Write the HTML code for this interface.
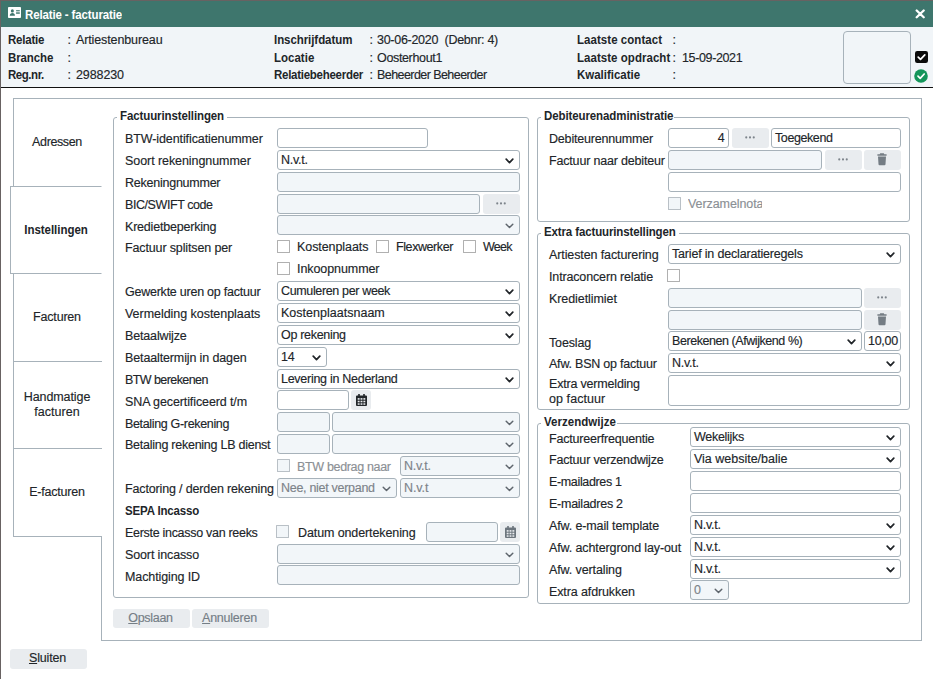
<!DOCTYPE html><html lang="nl"><head><meta charset="utf-8"><title>Relatie - facturatie</title><style>
*{box-sizing:border-box;margin:0;padding:0}
html,body{width:933px;height:679px;overflow:hidden;background:#fff}
body{font-family:"Liberation Sans",sans-serif;font-size:12.5px;color:#212529;position:relative}
.a{position:absolute}
.t{position:absolute;white-space:pre;line-height:16px;height:16px;-webkit-text-stroke:0.15px currentColor}
.b{font-weight:bold;-webkit-text-stroke:0;transform:scaleY(1.05);transform-origin:0 60%}
.g{color:#8b9095}
.in{position:absolute;border:1px solid #a7b2ba;border-radius:3px;background:#fff;height:20px;overflow:hidden}
.dis{background:#f2f6f9}
.in .t{top:1px;left:3px}
.btn{position:absolute;background:#e9ecef;border-radius:3px;height:20px;color:#6c757d}
.cb{position:absolute;width:13px;height:13px;border:1px solid #b0b0b0;border-radius:0.5px;background:#fff}
.cb.dis{background:#f2f6f9;border-color:#b9c0c6}
.fs{position:absolute;border:1px solid #a7b2ba;border-radius:3px}
.lg{position:absolute;background:#fff;padding:0 1px 0 3px;font-weight:bold;white-space:nowrap;line-height:16px;transform:scaleY(1.05);transform-origin:0 60%}
.tab{position:absolute;left:13px;width:89px;border:1px solid #a7b2ba;background:#fff;text-align:center}
.chev{position:absolute;right:5px;top:6.600px;width:9px;height:6px}
.dots{position:absolute;left:50%;top:8px;margin-left:-6px;width:10px;height:3px}
</style></head><body>
<div class="a" style="left:0;top:0;width:933px;height:27px;background:#3e766d"></div>
<div class="a" style="left:0;top:0;width:933px;height:1px;background:#686262"></div>
<div class="a" style="left:0;top:27px;width:933px;height:60px;background:#f1f5f8"></div>
<div class="a" style="left:0;top:87px;width:933px;height:1px;background:#111"></div>
<div class="a" style="left:0;top:0;width:1px;height:679px;background:#686262"></div>
<svg class="a" style="left:8px;top:7px;width:13px;height:11px" viewBox="0 0 14 11" preserveAspectRatio="none"><rect x="0" y="0" width="14" height="11" rx="0.900" fill="#fff"/><circle cx="4.700" cy="3.900" r="1.650" fill="#3e766d"/><path d="M1.900 8.700c0-1.900 1.300-2.700 2.800-2.700s2.800 0.800 2.800 2.700z" fill="#3e766d"/><rect x="8.700" y="3.200" width="4" height="1.100" fill="#3e766d"/><rect x="8.700" y="5.200" width="4" height="1.700" fill="#3e766d" opacity="0.850"/></svg>
<div class="t b" style="left:25px;top:7px;letter-spacing:-0.135px;font-size:11.5px;color:#fff">Relatie - facturatie</div>
<svg class="a" style="left:915px;top:9px;width:10px;height:10px" viewBox="0 0 10 10"><path d="M1.700 1.500L8.700 8.300M8.700 1.500L1.700 8.300" stroke="#fff" stroke-width="2.300" stroke-linecap="round"/></svg>
<div class="t b" style="left:8px;top:32px;letter-spacing:-0.203px;font-size:11.5px;">Relatie</div>
<div class="t " style="left:67.5px;top:32px;letter-spacing:-0.53px;">:</div>
<div class="t " style="left:76px;top:32px;letter-spacing:-0.118px;white-space:pre">Artiestenbureau</div>
<div class="t b" style="left:8px;top:50px;letter-spacing:-0.104px;font-size:11.5px;">Branche</div>
<div class="t " style="left:67.5px;top:50px;letter-spacing:-0.53px;">:</div>
<div class="t b" style="left:8px;top:67px;letter-spacing:-0.455px;font-size:11.5px;">Reg.nr.</div>
<div class="t " style="left:67.5px;top:67px;letter-spacing:-0.53px;">:</div>
<div class="t " style="left:76px;top:67px;letter-spacing:-0.103px;white-space:pre">2988230</div>
<div class="t b" style="left:274px;top:32px;letter-spacing:-0.067px;font-size:11.5px;">Inschrijfdatum</div>
<div class="t " style="left:369.5px;top:32px;letter-spacing:-0.53px;">:</div>
<div class="t " style="left:377px;top:32px;letter-spacing:-0.281px;white-space:pre">30-06-2020  (Debnr: 4)</div>
<div class="t b" style="left:274px;top:50px;letter-spacing:0.005px;font-size:11.5px;">Locatie</div>
<div class="t " style="left:369.5px;top:50px;letter-spacing:-0.53px;">:</div>
<div class="t " style="left:377px;top:50px;letter-spacing:-0.345px;white-space:pre">Oosterhout1</div>
<div class="t b" style="left:274px;top:67px;letter-spacing:-0.267px;font-size:11.5px;">Relatiebeheerder</div>
<div class="t " style="left:369.5px;top:67px;letter-spacing:-0.53px;">:</div>
<div class="t " style="left:377px;top:67px;letter-spacing:-0.565px;white-space:pre">Beheerder Beheerder</div>
<div class="t b" style="left:577px;top:32px;letter-spacing:0.046px;font-size:11.5px;">Laatste contact</div>
<div class="t " style="left:672.5px;top:32px;letter-spacing:-0.53px;">:</div>
<div class="t b" style="left:577px;top:50px;letter-spacing:0.039px;font-size:11.5px;">Laatste opdracht</div>
<div class="t " style="left:672.5px;top:50px;letter-spacing:-0.53px;">:</div>
<div class="t " style="left:682px;top:50px;letter-spacing:-0.365px;white-space:pre">15-09-2021</div>
<div class="t b" style="left:577px;top:67px;letter-spacing:-0.019px;font-size:11.5px;">Kwalificatie</div>
<div class="t " style="left:672.5px;top:67px;letter-spacing:-0.53px;">:</div>
<div class="a" style="left:843px;top:31px;width:68px;height:53px;border:1px solid #a7b2ba;border-radius:4px;background:#f1f5f8"></div>
<svg class="a" style="left:915px;top:51px;width:13px;height:12px" viewBox="0 0 13 12"><rect width="13" height="12" rx="2.200" fill="#0b0b0b"/><path d="M3.200 6.200l2.300 2.200 4.300-4.600" fill="none" stroke="#fff" stroke-width="1.700" stroke-linecap="round" stroke-linejoin="round"/></svg>
<svg class="a" style="left:914px;top:69px;width:14px;height:14px" viewBox="0 0 14 14"><circle cx="7" cy="7" r="6.800" fill="#14955a"/><path d="M4 7.200l2.200 2.100 4-4.300" fill="none" stroke="#fff" stroke-width="1.700" stroke-linecap="round" stroke-linejoin="round"/></svg>
<div class="a" style="left:101px;top:98px;width:821px;height:543px;border:1px solid #a7b2ba;background:#fff"></div>
<div class="a" style="left:13px;top:98px;width:89px;height:439px;border:1px solid #a7b2ba;border-right:none;background:#fff"></div>
<div class="a" style="left:13px;top:98px;width:89px;height:1px;background:#a7b2ba"></div>
<div class="t " style="left:57px;top:134px;letter-spacing:-0.377px;left:13px;width:88px;text-align:center">Adressen</div>
<div class="a" style="left:13px;top:273px;width:89px;height:1px;background:#a7b2ba"></div>
<div class="t " style="left:57px;top:309px;letter-spacing:-0.193px;left:13px;width:88px;text-align:center">Facturen</div>
<div class="a" style="left:13px;top:361px;width:89px;height:1px;background:#a7b2ba"></div>
<div class="t " style="left:57px;top:389px;letter-spacing:-0.088px;left:13px;width:88px;text-align:center">Handmatige</div>
<div class="t " style="left:57px;top:404px;letter-spacing:0.015px;left:13px;width:88px;text-align:center">facturen</div>
<div class="a" style="left:13px;top:448px;width:89px;height:1px;background:#a7b2ba"></div>
<div class="t " style="left:57px;top:484px;letter-spacing:-0.208px;left:13px;width:88px;text-align:center">E-facturen</div>
<div class="a" style="left:10px;top:186px;width:92px;height:88px;border:1px solid #a7b2ba;border-right:1px solid #fff;background:#fff"></div>
<div class="t b" style="left:57px;top:222px;letter-spacing:-0.034px;font-size:11.5px;left:11px;width:90px;text-align:center">Instellingen</div>
<div class="fs" style="left:113px;top:117px;width:416px;height:481px"></div>
<div class="lg" style="left:117px;top:108px;padding-right:3px;letter-spacing:-0.109px;font-size:11.5px;">Factuurinstellingen</div>
<div class="t " style="left:125px;top:131.3px;letter-spacing:-0.1px;">BTW-identificatienummer</div>
<div class="in" style="left:277px;top:128px;width:151px;height:20px"></div>
<div class="t " style="left:125px;top:153.17px;letter-spacing:-0.068px;">Soort rekeningnummer</div>
<div class="in sel" style="left:277px;top:150px;width:243px"><div class="t" style="color:#212529;letter-spacing:-0.275px;">N.v.t.</div><svg class="chev" viewBox="0 0 9 6"><path d="M1.200 1.200 L4.500 4.600 L7.800 1.200" fill="none" stroke="#212529" stroke-width="1.7" stroke-linecap="round" stroke-linejoin="round"/></svg></div>
<div class="t " style="left:125px;top:175.04px;letter-spacing:-0.241px;">Rekeningnummer</div>
<div class="in dis" style="left:277px;top:172px;width:243px;height:20px"></div>
<div class="t " style="left:125px;top:196.91px;letter-spacing:-0.428px;">BIC/SWIFT code</div>
<div class="in dis" style="left:277px;top:194px;width:203px;height:20px"></div>
<div class="btn" style="left:483px;top:194px;width:37px;height:20px;background:#e9ecef"><svg class="dots" viewBox="0 0 10 3"><circle cx="1.250" cy="1.400" r="1.050" fill="#7d848b"/><circle cx="5" cy="1.400" r="1.050" fill="#7d848b"/><circle cx="8.750" cy="1.400" r="1.050" fill="#7d848b"/></svg></div>
<div class="t " style="left:125px;top:218.78px;letter-spacing:-0.201px;">Kredietbeperking</div>
<div class="in sel dis" style="left:277px;top:215px;width:243px"><svg class="chev" viewBox="0 0 9 6"><path d="M1.200 1.200 L4.500 4.600 L7.800 1.200" fill="none" stroke="#5f666d" stroke-width="1.45" stroke-linecap="round" stroke-linejoin="round"/></svg></div>
<div class="t " style="left:125px;top:240.25px;letter-spacing:-0.137px;">Factuur splitsen per</div>
<div class="cb" style="left:277px;top:240px"></div>
<div class="t " style="left:297px;top:239px;letter-spacing:-0.071px;">Kostenplaats</div>
<div class="cb" style="left:376px;top:240px"></div>
<div class="t " style="left:396px;top:239px;letter-spacing:-0.412px;">Flexwerker</div>
<div class="cb" style="left:463px;top:240px"></div>
<div class="t " style="left:483px;top:239px;letter-spacing:-0.734px;">Week</div>
<div class="cb" style="left:277px;top:262px"></div>
<div class="t " style="left:297px;top:261px;letter-spacing:-0.079px;">Inkoopnummer</div>
<div class="t " style="left:125px;top:284.39px;letter-spacing:-0.239px;">Gewerkte uren op factuur</div>
<div class="in sel" style="left:277px;top:281px;width:243px"><div class="t" style="color:#212529;letter-spacing:-0.352px;">Cumuleren per week</div><svg class="chev" viewBox="0 0 9 6"><path d="M1.200 1.200 L4.500 4.600 L7.800 1.200" fill="none" stroke="#212529" stroke-width="1.7" stroke-linecap="round" stroke-linejoin="round"/></svg></div>
<div class="t " style="left:125px;top:306.26px;letter-spacing:-0.039px;">Vermelding kostenplaats</div>
<div class="in sel" style="left:277px;top:303px;width:243px"><div class="t" style="color:#212529;letter-spacing:0.016px;">Kostenplaatsnaam</div><svg class="chev" viewBox="0 0 9 6"><path d="M1.200 1.200 L4.500 4.600 L7.800 1.200" fill="none" stroke="#212529" stroke-width="1.7" stroke-linecap="round" stroke-linejoin="round"/></svg></div>
<div class="t " style="left:125px;top:328.13px;letter-spacing:-0.153px;">Betaalwijze</div>
<div class="in sel" style="left:277px;top:325px;width:243px"><div class="t" style="color:#212529;letter-spacing:-0.305px;">Op rekening</div><svg class="chev" viewBox="0 0 9 6"><path d="M1.200 1.200 L4.500 4.600 L7.800 1.200" fill="none" stroke="#212529" stroke-width="1.7" stroke-linecap="round" stroke-linejoin="round"/></svg></div>
<div class="t " style="left:125px;top:350.0px;letter-spacing:-0.129px;">Betaaltermijn in dagen</div>
<div class="in sel" style="left:277px;top:347px;width:50px"><div class="t" style="color:#212529;letter-spacing:-0.103px;">14</div><svg class="chev" viewBox="0 0 9 6"><path d="M1.200 1.200 L4.500 4.600 L7.800 1.200" fill="none" stroke="#212529" stroke-width="1.7" stroke-linecap="round" stroke-linejoin="round"/></svg></div>
<div class="t " style="left:125px;top:371.87px;letter-spacing:-0.579px;">BTW berekenen</div>
<div class="in sel" style="left:277px;top:369px;width:243px"><div class="t" style="color:#212529;letter-spacing:-0.277px;">Levering in Nederland</div><svg class="chev" viewBox="0 0 9 6"><path d="M1.200 1.200 L4.500 4.600 L7.800 1.200" fill="none" stroke="#212529" stroke-width="1.7" stroke-linecap="round" stroke-linejoin="round"/></svg></div>
<div class="t " style="left:125px;top:393.74px;letter-spacing:-0.105px;">SNA gecertificeerd t/m</div>
<div class="in" style="left:277px;top:390px;width:72px;height:20px"></div>
<div class="btn" style="left:351px;top:390px;width:20px;height:20px;background:#e9ecef"><svg class="a" style="left:50%;top:3.500px;margin-left:-5.500px;width:11px;height:12px" viewBox="0 0 11 12"><path d="M2.200 0h1.600v1.400h3.400V0h1.600v1.400H10a1 1 0 0 1 1 1V11a1 1 0 0 1-1 1H1a1 1 0 0 1-1-1V2.400a1 1 0 0 1 1-1h1.200z" fill="#212529"/><g fill="#e9ecef"><rect x="1.700" y="4.100" width="1.900" height="1.600"/><rect x="4.550" y="4.100" width="1.900" height="1.600"/><rect x="7.400" y="4.100" width="1.900" height="1.600"/><rect x="1.700" y="6.700" width="1.900" height="1.600"/><rect x="4.550" y="6.700" width="1.900" height="1.600"/><rect x="7.400" y="6.700" width="1.900" height="1.600"/><rect x="1.700" y="9.300" width="1.900" height="1.500"/><rect x="4.550" y="9.300" width="1.900" height="1.500"/><rect x="7.400" y="9.300" width="1.900" height="1.500"/></g></svg></div>
<div class="t " style="left:125px;top:415.61px;letter-spacing:-0.339px;">Betaling G-rekening</div>
<div class="in dis" style="left:277px;top:412px;width:53px;height:20px"></div>
<div class="in sel dis" style="left:332px;top:412px;width:188px"><svg class="chev" viewBox="0 0 9 6"><path d="M1.200 1.200 L4.500 4.600 L7.800 1.200" fill="none" stroke="#5f666d" stroke-width="1.45" stroke-linecap="round" stroke-linejoin="round"/></svg></div>
<div class="t " style="left:125px;top:437.48px;letter-spacing:-0.255px;">Betaling rekening LB dienst</div>
<div class="in dis" style="left:277px;top:434px;width:53px;height:20px"></div>
<div class="in sel dis" style="left:332px;top:434px;width:188px"><svg class="chev" viewBox="0 0 9 6"><path d="M1.200 1.200 L4.500 4.600 L7.800 1.200" fill="none" stroke="#5f666d" stroke-width="1.45" stroke-linecap="round" stroke-linejoin="round"/></svg></div>
<div class="cb dis" style="left:277px;top:459px"></div>
<div class="t g" style="left:297px;top:458.5px;letter-spacing:-0.334px;">BTW bedrag naar</div>
<div class="in sel dis" style="left:400px;top:456px;width:120px"><div class="t" style="color:#7d8389;letter-spacing:-0.275px;">N.v.t.</div><svg class="chev" viewBox="0 0 9 6"><path d="M1.200 1.200 L4.500 4.600 L7.800 1.200" fill="none" stroke="#5f666d" stroke-width="1.45" stroke-linecap="round" stroke-linejoin="round"/></svg></div>
<div class="t " style="left:125px;top:481.22px;letter-spacing:-0.151px;">Factoring / derden rekening</div>
<div class="in sel dis" style="left:277px;top:478px;width:120px"><div class="t" style="color:#7d8389;letter-spacing:-0.288px;">Nee, niet verpand</div><svg class="chev" viewBox="0 0 9 6"><path d="M1.200 1.200 L4.500 4.600 L7.800 1.200" fill="none" stroke="#5f666d" stroke-width="1.45" stroke-linecap="round" stroke-linejoin="round"/></svg></div>
<div class="in sel dis" style="left:400px;top:478px;width:120px"><div class="t" style="color:#7d8389;letter-spacing:-0.096px;">N.v.t</div><svg class="chev" viewBox="0 0 9 6"><path d="M1.200 1.200 L4.500 4.600 L7.800 1.200" fill="none" stroke="#5f666d" stroke-width="1.45" stroke-linecap="round" stroke-linejoin="round"/></svg></div>
<div class="t b" style="left:125px;top:503.09px;letter-spacing:-0.168px;font-size:11.5px;">SEPA Incasso</div>
<div class="t " style="left:125px;top:524.96px;letter-spacing:-0.296px;">Eerste incasso van reeks</div>
<div class="cb dis" style="left:276px;top:525px"></div>
<div class="t " style="left:298px;top:524.75px;letter-spacing:-0.107px;">Datum ondertekening</div>
<div class="in dis" style="left:426px;top:522px;width:72px;height:20px"></div>
<div class="btn" style="left:500px;top:522px;width:20px;height:20px;background:#e9ecef"><svg class="a" style="left:50%;top:3.500px;margin-left:-5.500px;width:11px;height:12px" viewBox="0 0 11 12"><path d="M2.200 0h1.600v1.400h3.400V0h1.600v1.400H10a1 1 0 0 1 1 1V11a1 1 0 0 1-1 1H1a1 1 0 0 1-1-1V2.400a1 1 0 0 1 1-1h1.200z" fill="#6c757d"/><g fill="#e9ecef"><rect x="1.700" y="4.100" width="1.900" height="1.600"/><rect x="4.550" y="4.100" width="1.900" height="1.600"/><rect x="7.400" y="4.100" width="1.900" height="1.600"/><rect x="1.700" y="6.700" width="1.900" height="1.600"/><rect x="4.550" y="6.700" width="1.900" height="1.600"/><rect x="7.400" y="6.700" width="1.900" height="1.600"/><rect x="1.700" y="9.300" width="1.900" height="1.500"/><rect x="4.550" y="9.300" width="1.900" height="1.500"/><rect x="7.400" y="9.300" width="1.900" height="1.500"/></g></svg></div>
<div class="t " style="left:125px;top:546.83px;letter-spacing:-0.13px;">Soort incasso</div>
<div class="in sel dis" style="left:277px;top:544px;width:243px"><svg class="chev" viewBox="0 0 9 6"><path d="M1.200 1.200 L4.500 4.600 L7.800 1.200" fill="none" stroke="#5f666d" stroke-width="1.45" stroke-linecap="round" stroke-linejoin="round"/></svg></div>
<div class="t " style="left:125px;top:568.7px;letter-spacing:-0.107px;">Machtiging ID</div>
<div class="in dis" style="left:277px;top:565px;width:243px;height:20px"></div>
<div class="btn" style="left:113px;top:609px;width:77px;height:19px;background:#e9ecef"><div class="t" style="left:-1px;width:100%;text-align:center;top:0.5px;color:#757e86;letter-spacing:-0.296px;"><u>O</u>pslaan</div></div>
<div class="btn" style="left:192px;top:609px;width:77px;height:19px;background:#e9ecef"><div class="t" style="left:-1px;width:100%;text-align:center;top:0.5px;color:#757e86;letter-spacing:-0.234px;"><u>A</u>nnuleren</div></div>
<div class="btn" style="left:10px;top:649px;width:77px;height:20px;background:#e9ecef"><div class="t" style="left:-1px;width:100%;text-align:center;top:1px;color:#212529;letter-spacing:-0.167px;"><u>S</u>luiten</div></div>
<div class="fs" style="left:537px;top:117px;width:373px;height:105px"></div>
<div class="lg" style="left:541px;top:108px;padding-right:1px;letter-spacing:-0.102px;font-size:11.5px;">Debiteurenadministratie</div>
<div class="t " style="left:549px;top:131px;letter-spacing:-0.184px;">Debiteurennummer</div>
<div class="in" style="left:668px;top:128px;width:61px;height:20px"><div class="t" style="left:auto;right:3.300px;letter-spacing:-0.103px;">4</div></div>
<div class="btn" style="left:732px;top:128px;width:37px;height:20px;background:#e9ecef"><svg class="dots" viewBox="0 0 10 3"><circle cx="1.250" cy="1.400" r="1.050" fill="#7d848b"/><circle cx="5" cy="1.400" r="1.050" fill="#7d848b"/><circle cx="8.750" cy="1.400" r="1.050" fill="#7d848b"/></svg></div>
<div class="in" style="left:771px;top:128px;width:130px;height:20px"><div class="t" style="letter-spacing:-0.408px;">Toegekend</div></div>
<div class="t " style="left:549px;top:153px;letter-spacing:-0.177px;">Factuur naar debiteur</div>
<div class="in dis" style="left:668px;top:150px;width:154px;height:20px"></div>
<div class="btn" style="left:825px;top:150px;width:37px;height:20px;background:#e9ecef"><svg class="dots" viewBox="0 0 10 3"><circle cx="1.250" cy="1.400" r="1.050" fill="#7d848b"/><circle cx="5" cy="1.400" r="1.050" fill="#7d848b"/><circle cx="8.750" cy="1.400" r="1.050" fill="#7d848b"/></svg></div>
<div class="btn" style="left:864px;top:150px;width:37px;height:20px;background:#e9ecef"><svg class="a" style="left:50%;top:3px;margin-left:-5.800px;width:10px;height:12.500px" viewBox="0 0 10 12" preserveAspectRatio="none"><path d="M3.2 0.3h3.6l0.5 0.9H9.6v1.4H0.4V1.2h2.3z M1 3.4h8l-0.5 7.4a1 1 0 0 1-1 0.9H2.5a1 1 0 0 1-1-0.9z" fill="#747c84"/></svg></div>
<div class="in" style="left:668px;top:172px;width:233px;height:20px"></div>
<div class="cb dis" style="left:668px;top:197px"></div>
<div class="a" style="left:688px;top:196px;width:74px;height:16px;overflow:hidden"><div class="t g" style="left:0;top:0;letter-spacing:-0.081px;">Verzamelnota</div></div>
<div class="fs" style="left:537px;top:233px;width:373px;height:177px"></div>
<div class="lg" style="left:541px;top:224px;padding-right:3px;letter-spacing:-0.127px;font-size:11.5px;">Extra factuurinstellingen</div>
<div class="t " style="left:549px;top:247px;letter-spacing:-0.11px;">Artiesten facturering</div>
<div class="in sel" style="left:668px;top:244px;width:233px"><div class="t" style="color:#212529;letter-spacing:-0.181px;">Tarief in declaratieregels</div><svg class="chev" viewBox="0 0 9 6"><path d="M1.200 1.200 L4.500 4.600 L7.800 1.200" fill="none" stroke="#212529" stroke-width="1.7" stroke-linecap="round" stroke-linejoin="round"/></svg></div>
<div class="t " style="left:549px;top:269px;letter-spacing:-0.148px;">Intraconcern relatie</div>
<div class="cb" style="left:667px;top:269px"></div>
<div class="t " style="left:549px;top:291px;letter-spacing:-0.075px;">Kredietlimiet</div>
<div class="in dis" style="left:668px;top:288px;width:194px;height:20px"></div>
<div class="btn" style="left:864px;top:288px;width:37px;height:20px;background:#e9ecef"><svg class="dots" viewBox="0 0 10 3"><circle cx="1.250" cy="1.400" r="1.050" fill="#7d848b"/><circle cx="5" cy="1.400" r="1.050" fill="#7d848b"/><circle cx="8.750" cy="1.400" r="1.050" fill="#7d848b"/></svg></div>
<div class="in dis" style="left:668px;top:310px;width:194px;height:20px"></div>
<div class="btn" style="left:864px;top:310px;width:37px;height:20px;background:#e9ecef"><svg class="a" style="left:50%;top:3px;margin-left:-5.800px;width:10px;height:12.500px" viewBox="0 0 10 12" preserveAspectRatio="none"><path d="M3.2 0.3h3.6l0.5 0.9H9.6v1.4H0.4V1.2h2.3z M1 3.4h8l-0.5 7.4a1 1 0 0 1-1 0.9H2.5a1 1 0 0 1-1-0.9z" fill="#747c84"/></svg></div>
<div class="t " style="left:549px;top:335px;letter-spacing:-0.149px;">Toeslag</div>
<div class="in sel" style="left:668px;top:331px;width:194px"><div class="t" style="color:#212529;letter-spacing:-0.437px;">Berekenen (Afwijkend %)</div><svg class="chev" viewBox="0 0 9 6"><path d="M1.200 1.200 L4.500 4.600 L7.800 1.200" fill="none" stroke="#212529" stroke-width="1.7" stroke-linecap="round" stroke-linejoin="round"/></svg></div>
<div class="in" style="left:864px;top:331px;width:37px;height:20px"><div class="t" style="letter-spacing:-0.297px;">10,00</div></div>
<div class="t " style="left:549px;top:355.75px;letter-spacing:-0.214px;">Afw. BSN op factuur</div>
<div class="in sel" style="left:668px;top:353px;width:233px"><div class="t" style="color:#212529;letter-spacing:-0.275px;">N.v.t.</div><svg class="chev" viewBox="0 0 9 6"><path d="M1.200 1.200 L4.500 4.600 L7.800 1.200" fill="none" stroke="#212529" stroke-width="1.7" stroke-linecap="round" stroke-linejoin="round"/></svg></div>
<div class="t " style="left:549px;top:375.75px;letter-spacing:-0.187px;">Extra vermelding</div>
<div class="t " style="left:549px;top:391px;letter-spacing:0.071px;">op factuur</div>
<div class="in" style="left:668px;top:375px;width:233px;height:31px"></div>
<div class="fs" style="left:537px;top:423px;width:373px;height:181px"></div>
<div class="lg" style="left:541px;top:413.7px;padding-right:1px;letter-spacing:0.036px;font-size:11.5px;">Verzendwijze</div>
<div class="t " style="left:549px;top:431px;letter-spacing:-0.2px;">Factureerfrequentie</div>
<div class="in sel" style="left:690px;top:427px;width:211px"><div class="t" style="color:#212529;letter-spacing:-0.279px;">Wekelijks</div><svg class="chev" viewBox="0 0 9 6"><path d="M1.200 1.200 L4.500 4.600 L7.800 1.200" fill="none" stroke="#212529" stroke-width="1.7" stroke-linecap="round" stroke-linejoin="round"/></svg></div>
<div class="t " style="left:549px;top:452px;letter-spacing:-0.178px;">Factuur verzendwijze</div>
<div class="in sel" style="left:690px;top:449px;width:211px"><div class="t" style="color:#212529;letter-spacing:-0.009px;">Via website/balie</div><svg class="chev" viewBox="0 0 9 6"><path d="M1.200 1.200 L4.500 4.600 L7.800 1.200" fill="none" stroke="#212529" stroke-width="1.7" stroke-linecap="round" stroke-linejoin="round"/></svg></div>
<div class="t " style="left:549px;top:474.25px;letter-spacing:-0.352px;">E-mailadres 1</div>
<div class="in" style="left:690px;top:471px;width:211px;height:20px"></div>
<div class="t " style="left:549px;top:496.25px;letter-spacing:-0.256px;">E-mailadres 2</div>
<div class="in" style="left:690px;top:493px;width:211px;height:20px"></div>
<div class="t " style="left:549px;top:517.75px;letter-spacing:-0.125px;">Afw. e-mail template</div>
<div class="in sel" style="left:690px;top:515px;width:211px"><div class="t" style="color:#212529;letter-spacing:-0.275px;">N.v.t.</div><svg class="chev" viewBox="0 0 9 6"><path d="M1.200 1.200 L4.500 4.600 L7.800 1.200" fill="none" stroke="#212529" stroke-width="1.7" stroke-linecap="round" stroke-linejoin="round"/></svg></div>
<div class="t " style="left:549px;top:539.75px;letter-spacing:-0.114px;">Afw. achtergrond lay-out</div>
<div class="in sel" style="left:690px;top:537px;width:211px"><div class="t" style="color:#212529;letter-spacing:-0.275px;">N.v.t.</div><svg class="chev" viewBox="0 0 9 6"><path d="M1.200 1.200 L4.500 4.600 L7.800 1.200" fill="none" stroke="#212529" stroke-width="1.7" stroke-linecap="round" stroke-linejoin="round"/></svg></div>
<div class="t " style="left:549px;top:561.75px;letter-spacing:-0.11px;">Afw. vertaling</div>
<div class="in sel" style="left:690px;top:559px;width:211px"><div class="t" style="color:#212529;letter-spacing:-0.275px;">N.v.t.</div><svg class="chev" viewBox="0 0 9 6"><path d="M1.200 1.200 L4.500 4.600 L7.800 1.200" fill="none" stroke="#212529" stroke-width="1.7" stroke-linecap="round" stroke-linejoin="round"/></svg></div>
<div class="t " style="left:549px;top:583.5px;letter-spacing:-0.116px;">Extra afdrukken</div>
<div class="in sel dis" style="left:690px;top:580px;width:39px"><div class="t" style="color:#7d8389;letter-spacing:-0.103px;">0</div><svg class="chev" viewBox="0 0 9 6"><path d="M1.200 1.200 L4.500 4.600 L7.800 1.200" fill="none" stroke="#5f666d" stroke-width="1.45" stroke-linecap="round" stroke-linejoin="round"/></svg></div>
</body></html>
